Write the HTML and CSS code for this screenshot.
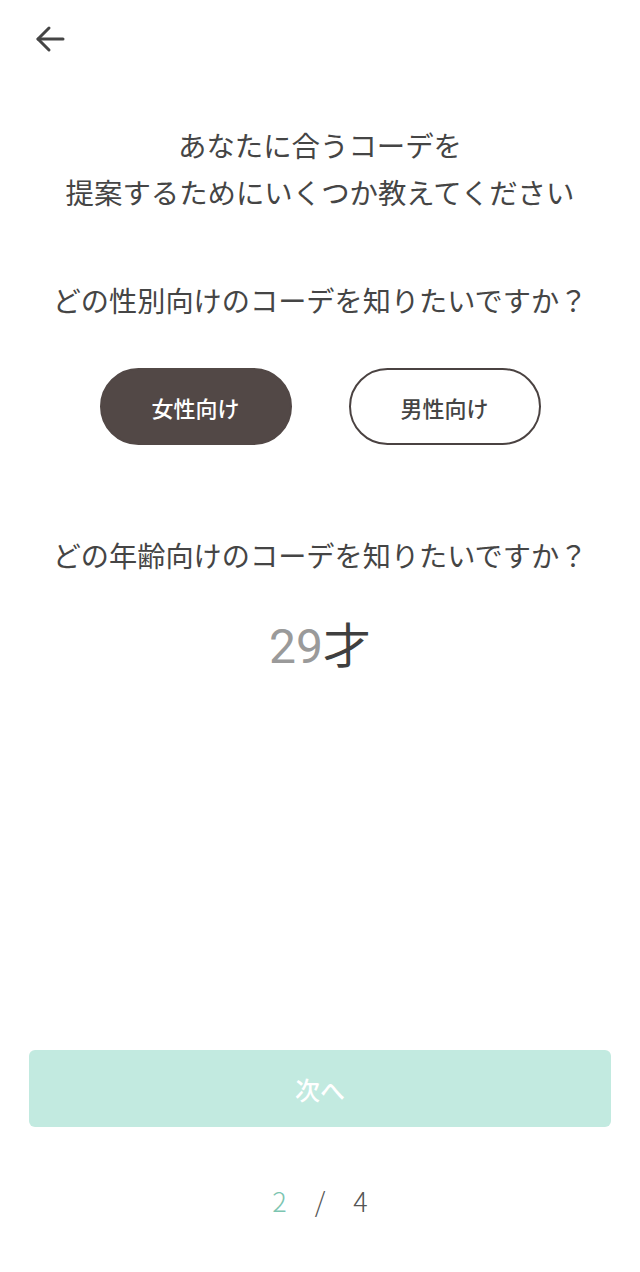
FILE: index.html
```html
<!DOCTYPE html>
<html lang="ja">
<head>
  <meta charset="UTF-8">
  <meta name="viewport" content="width=device-width, initial-scale=1.0">
  <title>コーデ診断</title>
  <link rel="stylesheet" href="styles.css">
</head>
<body>
  <div class="screen">
    <header class="top-bar">
      <button class="back-btn" aria-label="戻る">
        <svg width="32" height="32" viewBox="0 0 32 32" fill="none" stroke="#454545" stroke-width="3" stroke-linecap="round" stroke-linejoin="round">
          <path d="M29 16H4"/>
          <path d="M15 5L4 16l11 11"/>
        </svg>
      </button>
    </header>

    <main class="content">
      <p class="lead">あなたに合うコーデを<br>提案するためにいくつか教えてください</p>

      <p class="question q-gender">どの性別向けのコーデを知りたいですか？</p>
      <div class="choices">
        <button class="choice selected">女性向け</button>
        <button class="choice">男性向け</button>
      </div>

      <p class="question q-age">どの年齢向けのコーデを知りたいですか？</p>
      <div class="age"><span class="age-num">29</span><span class="age-unit">才</span></div>
    </main>

    <footer class="bottom">
      <button class="next-btn" disabled>次へ</button>
      <div class="pager">
        <span class="current">2</span>
        <span>/</span>
        <span>4</span>
      </div>
    </footer>
  </div>
</body>
</html>
```

FILE: styles.css
```css
body {
  margin: 0;
  padding: 0;
  background: #ffffff;
  font-family: "Noto Sans CJK JP", "Noto Sans", sans-serif;
  color: #454545;
}
.screen {
  height: 1272px;
  display: flex;
  flex-direction: column;
}
.top-bar {
  height: 78px;
  padding-left: 34px;
  display: flex;
  align-items: center;
}
.back-btn {
  background: transparent;
  border: none;
  padding: 0;
  width: 32px;
  height: 32px;
  cursor: pointer;
}
.content {
  flex: 1;
  display: flex;
  flex-direction: column;
  align-items: center;
}
.lead {
  margin: 43px 0 0;
  font-size: 28.4px;
  line-height: 47px;
  text-align: center;
  color: #454545;
}
.question {
  margin: 0;
  font-size: 28.2px;
  line-height: 40px;
  text-align: center;
}
.q-gender {
  margin-top: 65px;
}
.choices {
  display: flex;
  gap: 57px;
  margin-top: 48px;
}
.choice {
  width: 192px;
  height: 77px;
  border-radius: 39px;
  border: 2px solid #4a4241;
  background: #ffffff;
  color: #454545;
  font-family: inherit;
  font-size: 22px;
  font-weight: 500;
  cursor: pointer;
}
.choice.selected {
  background: #524846;
  border-color: #524846;
  color: #ffffff;
}
.q-age {
  margin-top: 90px;
}
.age {
  margin-top: 36px;
  font-size: 48px;
  line-height: 62px;
}
.age-num {
  color: #9a9a9a;
  font-family: Roboto, "Noto Sans CJK JP", sans-serif;
}
.age-unit {
  color: #3f3f3f;
}
.bottom {
  display: flex;
  flex-direction: column;
  align-items: center;
  padding: 0 29px 51px;
}
.next-btn {
  width: 100%;
  height: 77px;
  border: none;
  border-radius: 6px;
  background: #c2eae0;
  color: #ffffff;
  font-family: inherit;
  font-size: 25px;
  font-weight: 500;
}
.pager {
  margin-top: 54px;
  display: flex;
  gap: 28px;
  font-size: 27px;
  line-height: 40px;
  font-weight: 300;
  color: #555555;
}
.pager .current {
  color: #7cc5b1;
}
```
